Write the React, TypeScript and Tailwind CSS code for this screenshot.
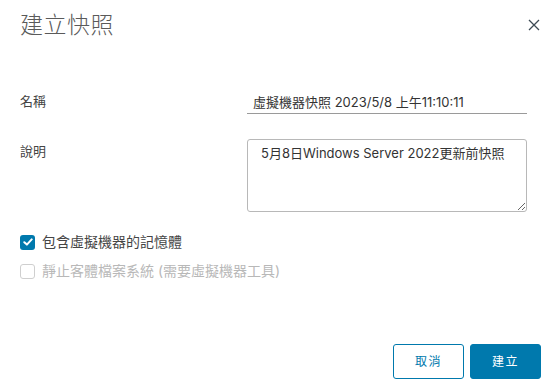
import { useState } from "react";

const FONT = "font-['Inter','Noto_Sans_CJK_TC',sans-serif]";

function Checkbox({
  checked,
  disabled,
  label,
}: {
  checked?: boolean;
  disabled?: boolean;
  label: string;
}) {
  return (
    <label className="flex h-5 items-center gap-[7px]">
      {checked ? (
        <span className="flex h-[15px] w-[15px] items-center justify-center rounded-[3px] bg-[#0079ad]">
          <svg width="10" height="8" viewBox="0 0 10 8" fill="none">
            <path
              d="M1.3 4.2 L3.9 6.6 L8.7 1.4"
              stroke="white"
              strokeWidth="2"
              strokeLinecap="round"
              strokeLinejoin="round"
            />
          </svg>
        </span>
      ) : (
        <span className="h-[15px] w-[15px] rounded-[3px] border border-[#cfcfcf] bg-white" />
      )}
      <span
        className={
          disabled
            ? "text-[14px] leading-5 text-[#b8b8b8]"
            : "text-[14px] leading-5 text-[#454545]"
        }
      >
        {label}
      </span>
    </label>
  );
}

export default function App() {
  const [name] = useState("虛擬機器快照 2023/5/8 上午11:10:11");
  const [desc] = useState("5月8日Windows Server 2022更新前快照");

  return (
    <div
      className={`flex h-[391px] w-[557px] flex-col bg-white pl-5 pr-4 ${FONT}`}
    >
      <div className="flex h-[50px] items-center justify-between">
        <h1 className="text-[23px] font-light leading-[30px] tracking-[0.5px] text-[#5a5a5a]">
          建立快照
        </h1>
        <button className="mr-[1px] flex h-3 w-3 items-center justify-center">
          <svg width="12" height="12" viewBox="0 0 12 12">
            <path
              d="M1 1 L11 11 M11 1 L1 11"
              stroke="#3d4a54"
              strokeWidth="1.3"
            />
          </svg>
        </button>
      </div>

      <div className="mt-[40px] flex items-center">
        <div className="w-[227px] text-[13px] text-[#454545]">名稱</div>
        <input
          readOnly
          value={name}
          className="h-6 w-[280px] border-b border-[#9a9a9a] pl-[6px] text-[13px] text-[#333333] outline-none"
        />
      </div>

      <div className="mt-[25px] flex items-start">
        <div className="w-[227px] pt-[2px] text-[13px] leading-5 text-[#454545]">
          說明
        </div>
        <textarea
          readOnly
          value={desc}
          className="h-[73px] w-[280px] rounded-[3px] border border-[#b8b8b8] px-[13px] py-[3px] text-[13px] leading-5 text-[#333333] outline-none"
        />
      </div>

      <div className="mt-[20px] flex flex-col gap-[9px]">
        <Checkbox checked label="包含虛擬機器的記憶體" />
        <Checkbox disabled label="靜止客體檔案系統 (需要虛擬機器工具)" />
      </div>

      <div className="mt-auto mb-3 flex justify-end gap-[6px]">
        <button className="h-[35px] w-[71px] rounded-[3px] border border-[#0079ad] bg-white text-[12px] tracking-[0.12em] text-[#0079ad]">
          取消
        </button>
        <button className="h-[35px] w-[71px] rounded-[3px] border border-[#0079ad] bg-[#0079ad] text-[12px] tracking-[0.12em] text-white">
          建立
        </button>
      </div>
    </div>
  );
}
